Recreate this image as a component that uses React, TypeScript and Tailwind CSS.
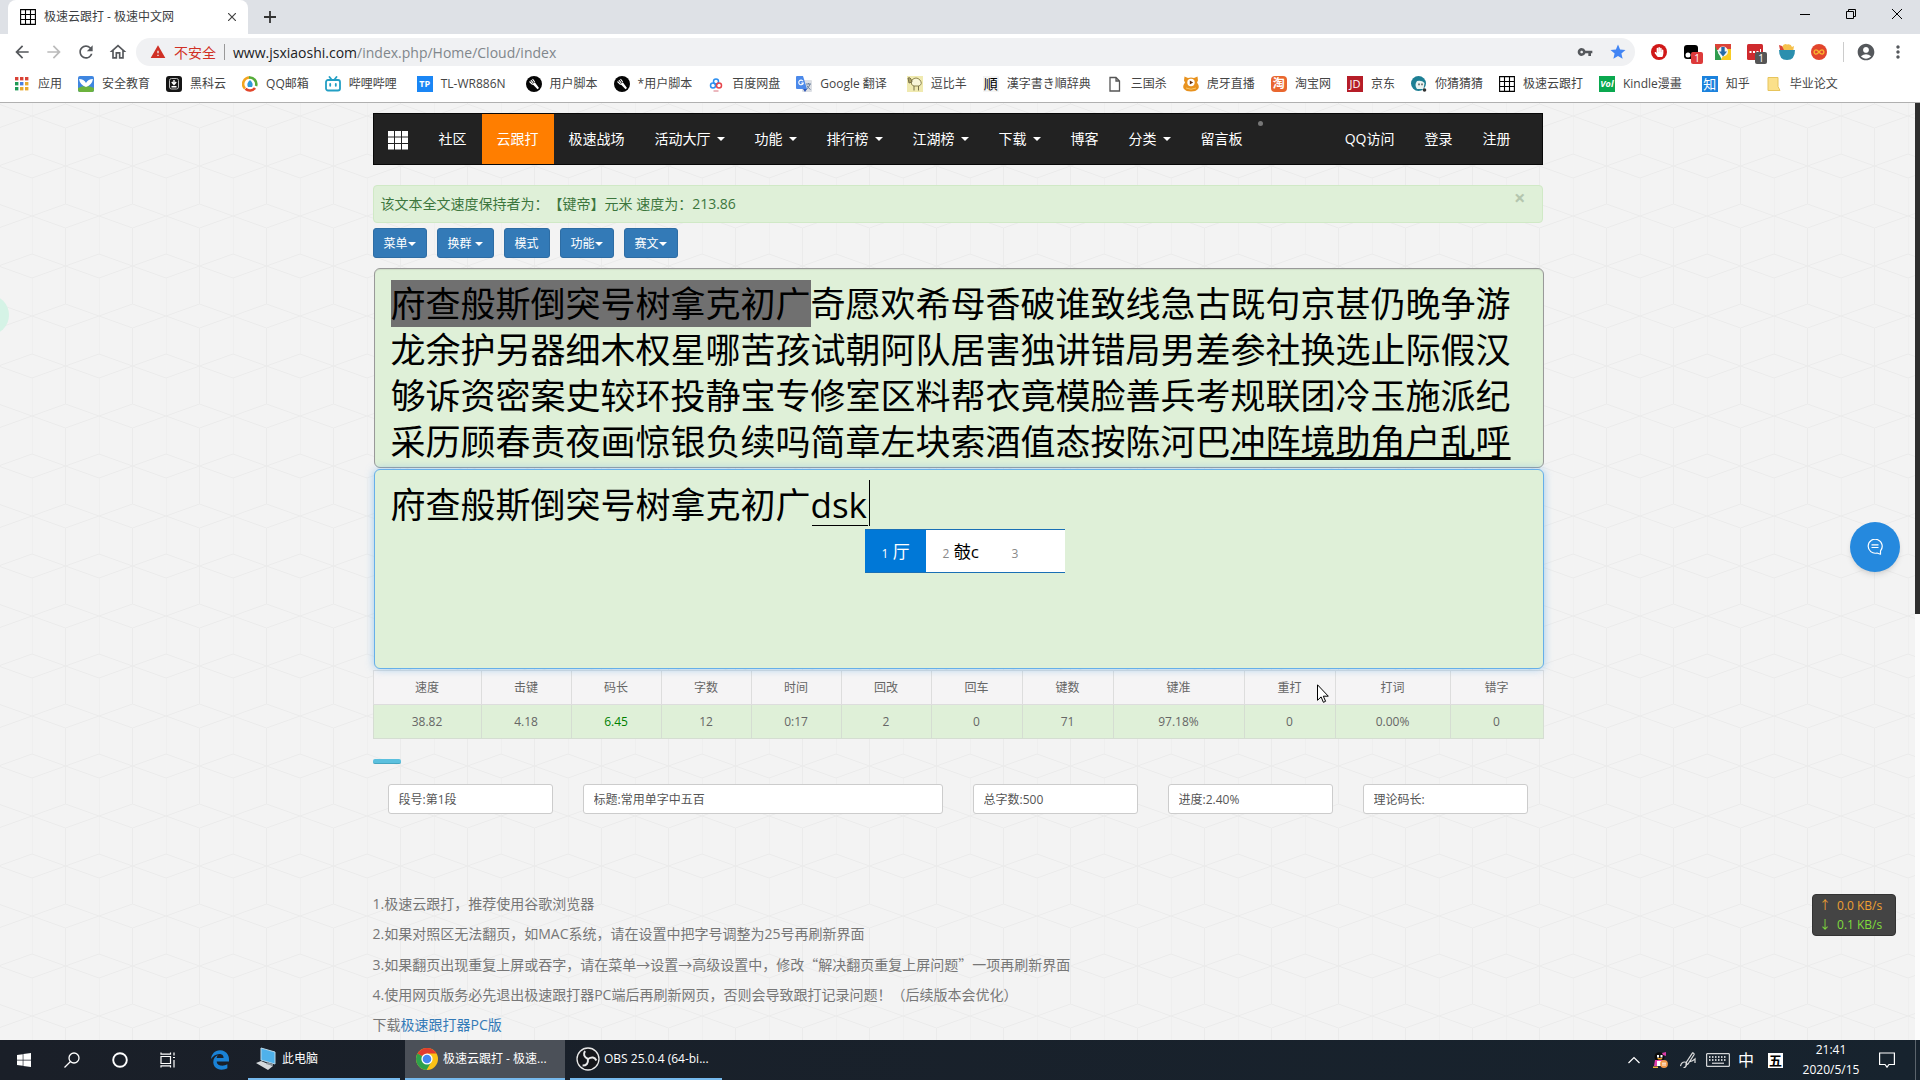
import React from 'react';
import {
  MdAccountCircle,
  MdArrowBack,
  MdArrowForward,
  MdMoreVert,
  MdOutlineHome,
  MdRefresh,
  MdStar,
  MdVpnKey,
  MdWarning,
} from 'react-icons/md';
import { FaEdgeLegacy, FaHandPaper, FaWindows } from 'react-icons/fa';

interface IconProps {
  className?: string;
}

const GridIcon: React.FC<IconProps> = ({ className }) => (
  <svg viewBox="0 0 16 16" className={className} fill="none" stroke="#000" strokeWidth="1.1" aria-hidden="true">
    <path d="M.6.6h14.8v14.8H.6zM5.5.6v14.8M10.5.6v14.8M.6 5.5h14.8M.6 10.5h14.8" />
  </svg>
);

const AppsIcon = () => (
  <svg viewBox="0 0 16 16" className="w-4 h-4" aria-hidden="true">
    {['#d94235', '#d94235', '#d94235', '#1e9a55', '#4a7fe0', '#e9a92c', '#1e9a55', '#e9a92c', '#e9a92c'].map((c, i) => (
      <rect key={i} x={1 + (i % 3) * 5} y={1 + Math.floor(i / 3) * 5} width="3.4" height="3.4" fill={c} />
    ))}
  </svg>
);

const WingIcon = () => (
  <svg viewBox="0 0 16 16" className="w-4 h-4" aria-hidden="true">
    <rect width="16" height="16" rx="2" fill="#3f86e0" />
    <path d="M0 12q8-4 16 0v2a2 2 0 0 1-2 2H2a2 2 0 0 1-2-2z" fill="#6cb33e" />
    <path d="M1 3q5 0 7 4 2-4 7-4-1 6-7 8Q2 9 1 3z" fill="#fff" />
  </svg>
);

const DarkCloudIcon = () => (
  <svg viewBox="0 0 16 16" className="w-4 h-4" aria-hidden="true">
    <rect width="16" height="16" rx="3" fill="#151515" />
    <rect x="3.500" y="2.500" width="9" height="10.500" rx="2" fill="none" stroke="#bbb" />
    <path d="M8 4v4M5.800 6L8 8.500 10.200 6M5.500 10.800h5" stroke="#fff" strokeWidth="1.400" fill="none" />
  </svg>
);

const MailIcon = () => (
  <svg viewBox="0 0 16 16" className="w-4 h-4" aria-hidden="true" fill="none" strokeWidth="2.600">
    <path d="M8 1.500A6.500 6.500 0 0 0 3 12.500" stroke="#f3a51f" />
    <path d="M7 1.600A6.500 6.500 0 0 1 14 10" stroke="#57ad3a" />
    <path d="M3.500 12.800A6.500 6.500 0 0 0 13 12" stroke="#e2462b" />
    <path d="M8 4q4 3.500 2 7H6Q4 7.500 8 4z" fill="#2f9ad8" />
  </svg>
);

const BiliIcon = () => (
  <svg viewBox="0 0 16 16" className="w-4 h-4" aria-hidden="true" fill="none" stroke="#239fc4" strokeWidth="1.800" strokeLinecap="round">
    <rect x="1" y="4" width="14" height="10.500" rx="2" />
    <path d="M4.500 1L6.500 3.500M11.500 1L9.500 3.500M5.200 8v1.800M10.800 8v1.800" />
  </svg>
);

const ScriptIcon = () => (
  <svg viewBox="0 0 16 16" className="w-4 h-4" aria-hidden="true">
    <circle cx="8" cy="8" r="8" fill="#050505" />
    <path d="M3.500 5.500L6 8q1.200.6 1.800 0M6.500 3l2.200 3M4.900 4.200l2.300 2.600" stroke="#fff" strokeWidth="1.100" fill="none" />
    <path d="M6.500 8l5 5.300 1.500-1.300L8.800 6.200z" fill="#fff" />
  </svg>
);

const PanIcon = () => (
  <svg viewBox="0 0 16 16" className="w-4 h-4" aria-hidden="true" fill="none" strokeWidth="1.500">
    <circle cx="8" cy="5.500" r="2.500" stroke="#2d8ff0" />
    <circle cx="5" cy="9.500" r="2.500" stroke="#2d8ff0" />
    <circle cx="11" cy="9.500" r="2.500" stroke="#e6454c" />
    <path d="M5.500 15h5" stroke="#e6a0a8" />
  </svg>
);

const TranslateIcon = () => (
  <svg viewBox="0 0 16 16" className="w-4 h-4" aria-hidden="true">
    <rect x="6" y="4" width="10" height="12" rx="1" fill="#dcdfe4" />
    <path d="M10 8h5M12.500 7v1M14 8q-1 4-4 5.500M11 9.500q1 2.500 3.500 4" stroke="#69809e" fill="none" />
    <path d="M1 0h6l4 13H1a1 1 0 0 1-1-1V1a1 1 0 0 1 1-1z" fill="#4b89ea" />
    <path d="M7 13h4l-2 3z" fill="#2f57b8" />
    <path d="M7 5.200A2.300 2.300 0 1 0 7.300 7H5.200" stroke="#fff" strokeWidth="1.100" fill="none" />
  </svg>
);

const SheepIcon = () => (
  <svg viewBox="0 0 16 16" className="w-4 h-4" aria-hidden="true">
    <rect width="16" height="16" fill="#f0eab0" />
    <path d="M5 4q4-4 8 0 3 4-1 6H7Q3 9 5 4z" fill="#f8f5d8" stroke="#8d8550" />
    <path d="M7 10v4.500M11.500 10v4.500M1 2q2-1 3 1l1 3-3 1z" stroke="#77704a" fill="#aaa060" />
  </svg>
);

const PageIcon = () => (
  <svg viewBox="0 0 16 16" className="w-4 h-4" aria-hidden="true" fill="none" stroke="#555" strokeWidth="1.300">
    <path d="M3 1.500h6L12.500 5v10H3zM9 1.500V5h3.500" />
  </svg>
);

const TigerIcon = () => (
  <svg viewBox="0 0 16 16" className="w-4 h-4" aria-hidden="true">
    <path d="M1.500.500L5 2q3-1 6 0l3.500-1.500.5 4-1 2q3 4 1 6.500-2 2.500-7 2.500T1 13q-2-2.500 1-6.500l-1-2z" fill="#e8921f" />
    <circle cx="8" cy="6.500" r="3.700" fill="#fff" />
    <path d="M6.800 4.500l3.400 2-3.400 2z" fill="#6b3410" />
    <path d="M3 12q5 2.500 10 0" stroke="#f7c768" fill="none" />
  </svg>
);

const GuessIcon = () => (
  <svg viewBox="0 0 16 16" className="w-4 h-4" aria-hidden="true">
    <circle cx="7.500" cy="7.500" r="7.500" fill="#1d7f94" />
    <path d="M6 5q5-1 7.500 2l-1 6H6Q3 9 6 5z" fill="#e9f3f2" />
    <path d="M8 7.500v1.800M11 7.500v1.800" stroke="#222" strokeWidth="1.100" />
    <circle cx="13.500" cy="14" r="1.800" fill="#333" />
  </svg>
);

const FolderIcon = () => (
  <svg viewBox="0 0 16 16" className="w-4 h-4" aria-hidden="true">
    <path d="M2 1.500h10v9l2 4H2z" fill="#fbe08a" stroke="#e7c45c" />
  </svg>
);

const LetterIcon: React.FC<{ text: string; className: string }> = ({ text, className }) => (
  <span className={`flex items-center justify-center w-4 h-4 leading-4 ${className}`} aria-hidden="true">
    {text}
  </span>
);

interface Bookmark {
  label: string;
  icon: React.ReactNode;
  wide?: boolean;
}

const bookmarks: Bookmark[] = [
  { label: '应用', icon: <AppsIcon /> },
  { label: '安全教育', icon: <WingIcon /> },
  { label: '黑科云', icon: <DarkCloudIcon /> },
  { label: 'QQ邮箱', icon: <MailIcon /> },
  { label: '哔哩哔哩', icon: <BiliIcon />, wide: true },
  { label: 'TL-WR886N', icon: <LetterIcon text="TP" className="bg-[#1a86f5] text-white text-[9px] font-bold" />, wide: true },
  { label: '用户脚本', icon: <ScriptIcon /> },
  { label: '*用户脚本', icon: <ScriptIcon /> },
  { label: '百度网盘', icon: <PanIcon /> },
  { label: 'Google 翻译', icon: <TranslateIcon />, wide: true },
  { label: '逗比羊', icon: <SheepIcon /> },
  { label: '漢字書き順辞典', icon: <LetterIcon text="順" className="bg-[#f4f4f4] text-black text-[14px]" /> },
  { label: '三国杀', icon: <PageIcon /> },
  { label: '虎牙直播', icon: <TigerIcon /> },
  { label: '淘宝网', icon: <LetterIcon text="淘" className="bg-[#e9672f] text-white text-[12px] font-bold rounded" /> },
  { label: '京东', icon: <LetterIcon text="JD" className="bg-[#b61d28] text-white text-[11px]" /> },
  { label: '你猜猜猜', icon: <GuessIcon /> },
  { label: '极速云跟打', icon: <GridIcon className="w-4 h-4" /> },
  { label: 'Kindle漫畫', icon: <LetterIcon text="Vol" className="bg-[#0aa84f] text-white text-[9px] font-bold italic" />, wide: true },
  { label: '知乎', icon: <LetterIcon text="知" className="bg-[#1b82dd] text-white text-[13px]" /> },
  { label: '毕业论文', icon: <FolderIcon /> },
];

const Badge: React.FC<{ className: string }> = ({ className }) => (
  <span className={`absolute left-2 top-2 w-3 h-3 rounded-xs text-white text-[10px] leading-3 text-center ${className}`}>1</span>
);

const Extensions = () => (
  <div className="flex items-center gap-4">
    <button aria-label="Adblock" className="flex items-center justify-center w-4 h-4 rounded-full bg-[#d01818] text-white">
      <FaHandPaper className="w-2.5 h-2.5" />
    </button>
    <button aria-label="Tampermonkey" className="relative w-4 h-4">
      <svg viewBox="0 0 16 16" className="w-4 h-4">
        <rect x="1" y="1" width="14" height="14" rx="3" fill="#000" />
        <circle cx="5" cy="11" r="2.500" fill="#fff" />
        <circle cx="11" cy="11" r="2.500" fill="#fff" />
      </svg>
      <Badge className="bg-[#dd3a3a]" />
    </button>
    <button aria-label="下载管理" className="w-4 h-4">
      <svg viewBox="0 0 16 16" className="w-4 h-4">
        <path d="M0 0h16v6H0z" fill="#dc4237" />
        <path d="M0 2l7 14H0z" fill="#2f9c4e" />
        <path d="M16 5v11H6l5-11z" fill="#f8cc24" />
        <circle cx="8" cy="7.500" r="5" fill="#f4f4f4" />
        <path d="M6.300 3h3.400v4.500H12L8 12.500 4 7.500h2.300z" fill="#2469a8" />
      </svg>
    </button>
    <button aria-label="LastPass" className="relative w-4 h-4">
      <svg viewBox="0 0 16 16" className="w-4 h-4">
        <rect width="16" height="16" rx="1.500" fill="#cf2a2e" />
        <path d="M2.500 8h2M6 8h2M9.500 8h2" stroke="#fff" strokeWidth="2" />
        <path d="M13.500 5v6" stroke="#fff" />
      </svg>
      <Badge className="bg-[#555]" />
    </button>
    <button aria-label="图片助手" className="w-4 h-4">
      <svg viewBox="0 0 16 16" className="w-4 h-4">
        <path d="M3 3q2-4 5-2.500Q12-.5 13 3l2-1-1 6H2z" fill="#f5c14c" />
        <path d="M0 1l3 1 2 4H1z" fill="#d8453b" />
        <path d="M0 6h16q0 10-8 10T0 6z" fill="#2b8fae" />
      </svg>
    </button>
    <button aria-label="Infinity" className="w-4 h-4">
      <svg viewBox="0 0 16 16" className="w-4 h-4">
        <circle cx="8" cy="8" r="8" fill="#e2452c" />
        <path d="M8 8Q5.500 5 4 6.200q-1.800 1.800 0 3.600Q5.500 11 8 8q2.500-3 4-1.800 1.800 1.800 0 3.600Q10.500 11 8 8z" stroke="#f9b52f" strokeWidth="1.400" fill="none" />
      </svg>
    </button>
  </div>
);

const BrowserChrome = () => (
  <header className="bg-white border-b border-[#b0b0b0] text-[#3c4043]">
    <div className="flex justify-between h-[34px] bg-[#dee1e6]">
      <div className="flex items-center pl-2">
        <div className="flex items-center w-60 h-full pl-3 pr-2 bg-white rounded-t-lg text-[12px]">
          <GridIcon className="w-4 h-4" />
          <span className="flex-1 pl-2">极速云跟打 - 极速中文网</span>
          <button aria-label="关闭标签页" className="p-1">
            <svg viewBox="0 0 8 8" className="w-2 h-2" stroke="#444" strokeWidth="1.200">
              <path d="M0 0l8 8M8 0L0 8" />
            </svg>
          </button>
        </div>
        <button aria-label="新标签页" className="ml-4">
          <svg viewBox="0 0 12 12" className="w-3 h-3" stroke="#333" strokeWidth="1.800">
            <path d="M6 0v12M0 6h12" />
          </svg>
        </button>
      </div>
      <div className="flex items-center h-7 text-black">
        <button aria-label="最小化" className="flex justify-center w-[46px]">
          <svg viewBox="0 0 10 10" className="w-2.5 h-2.5" stroke="currentColor"><path d="M0 5.500h10" /></svg>
        </button>
        <button aria-label="还原" className="flex justify-center w-[46px]">
          <svg viewBox="0 0 10 10" className="w-2.5 h-2.5" stroke="currentColor" fill="none"><path d="M.5 2.500h7v7h-7zM2.500 2.500v-2h7v7h-2" /></svg>
        </button>
        <button aria-label="关闭" className="flex justify-center w-[46px]">
          <svg viewBox="0 0 10 10" className="w-2.5 h-2.5" stroke="currentColor"><path d="M0 0l10 10M10 0L0 10" /></svg>
        </button>
      </div>
    </div>

    <div className="flex items-center h-9 pl-3 pr-3 text-[#55585c]">
      <nav className="flex items-center gap-3">
        <button aria-label="后退"><MdArrowBack className="w-5 h-5" /></button>
        <button aria-label="前进" className="text-[#bbb]"><MdArrowForward className="w-5 h-5" /></button>
        <button aria-label="刷新"><MdRefresh className="w-5 h-5" /></button>
        <button aria-label="主页"><MdOutlineHome className="w-5 h-5" /></button>
      </nav>
      <div className="flex items-center flex-1 h-7 ml-2 pl-2.5 pr-2 rounded-full bg-[#f0f1f3]">
        <MdWarning className="w-4 h-4 ml-1 text-[#d03025]" />
        <span className="ml-2 text-[14px] text-[#d03025]">不安全</span>
        <span className="w-px h-4 ml-2 mr-2 bg-[#999]"></span>
        <a href="#top" className="flex-1 text-[14px] text-[#80868b]">
          <span className="text-[#202124]">www.jsxiaoshi.com</span>/index.php/Home/Cloud/index
        </a>
        <MdVpnKey className="w-4 h-4 mr-4" />
        <MdStar className="w-[18px] h-[18px] text-[#4285f4]" />
      </div>
      <div className="flex items-center ml-4">
        <Extensions />
        <span className="w-px h-5 ml-4 mr-3 bg-[#ccc]"></span>
        <button aria-label="账户"><MdAccountCircle className="w-5 h-5" /></button>
        <button aria-label="菜单" className="ml-3"><MdMoreVert className="w-5 h-5" /></button>
      </div>
    </div>

    <nav className="flex items-center gap-4 h-7 mb-1 pl-3.5 text-[12px] text-[#444]">
      {bookmarks.map(({ label, icon, wide }, i) => (
        <a key={i} href="#bookmark" className={`flex items-center gap-2 whitespace-nowrap shrink-0 ${wide ? 'pr-1' : ''}`}>
          {icon}
          {label}
        </a>
      ))}
    </nav>
  </header>
);

const Caret: React.FC<IconProps> = ({ className = '' }) => (
  <span className={`inline-block border-x-4 border-t-4 border-x-transparent border-t-current align-middle ${className}`}></span>
);

const navItems = [
  { label: '社区' },
  { label: '云跟打', active: true },
  { label: '极速战场' },
  { label: '活动大厅', menu: true },
  { label: '功能', menu: true },
  { label: '排行榜', menu: true },
  { label: '江湖榜', menu: true },
  { label: '下载', menu: true },
  { label: '博客' },
  { label: '分类', menu: true },
  { label: '留言板' },
];

const SiteNav = () => (
  <nav className="relative flex justify-between h-[52px] mt-2.5 bg-[#222] border border-[#080808] text-[14px] text-white">
    <div className="flex">
      <a href="#home" aria-label="首页" className="flex items-center pl-[14px] pr-4 pt-0.5">
        <svg viewBox="0 0 20 20" className="w-5 h-5" fill="#fff">
          {[0, 1, 2, 3, 4, 5, 6, 7, 8].map((i) => (
            <rect key={i} x={(i % 3) * 7} y={1 + Math.floor(i / 3) * 6.5} width="6" height="5.500" />
          ))}
        </svg>
      </a>
      {navItems.map(({ label, active, menu }) => (
        <a key={label} href="#nav" className={`flex items-center px-[15px] pb-0.5 ${active ? 'bg-[#ff7e00]' : ''}`}>
          {label}
          {menu && <Caret className="mt-0.5 ml-1.5" />}
        </a>
      ))}
    </div>
    <div className="flex pr-4">
      {['QQ访问', '登录', '注册'].map((label) => (
        <a key={label} href="#nav" className="flex items-center px-[15px] pb-0.5">{label}</a>
      ))}
    </div>
    <span className="absolute left-[884px] top-[7px] w-[5px] h-[5px] rounded-full bg-[#777]"></span>
  </nav>
);

const toolButtons = [
  { label: '菜单', caret: '' },
  { label: '换群', caret: 'ml-[3px]' },
  { label: '模式' },
  { label: '功能', caret: '' },
  { label: '赛文', caret: '' },
];

const stats = [
  { name: '速度', value: '38.82', width: 'w-[108px]' },
  { name: '击键', value: '4.18', width: 'w-[90px]' },
  { name: '码长', value: '6.45', width: 'w-[90px]' },
  { name: '字数', value: '12', width: 'w-[90px]' },
  { name: '时间', value: '0:17', width: 'w-[90px]' },
  { name: '回改', value: '2', width: 'w-[90px]' },
  { name: '回车', value: '0', width: 'w-[91px]' },
  { name: '键数', value: '71', width: 'w-[91px]' },
  { name: '键准', value: '97.18%', width: 'w-[131px]' },
  { name: '重打', value: '0', width: 'w-[91px]' },
  { name: '打词', value: '0.00%', width: 'w-[115px]' },
  { name: '错字', value: '0', width: 'w-[93px]' },
];

const infoFields = [
  { label: '段号', value: '段号:第1段', span: 'col-span-2' },
  { label: '标题', value: '标题:常用单字中五百', span: 'col-span-4' },
  { label: '总字数', value: '总字数:500', span: 'col-span-2' },
  { label: '进度', value: '进度:2.40%', span: 'col-span-2' },
  { label: '理论码长', value: '理论码长:', span: 'col-span-2' },
];

const typed = '府查般斯倒突号树拿克初广';
const upcoming =
  '奇愿欢希母香破谁致线急古既句京甚仍晚争游龙余护另器细木权星哪苦孩试朝阿队居害独讲错局男差参社换选止际假汉够诉资密案史较环投静宝专修室区料帮衣竟模脸善兵考规联团冷玉施派纪采历顾春责夜画惊银负续吗简章左块索酒值态按陈河巴';
const nextWords = '冲阵境助角户乱呼';

const TypingArea = () => (
  <div className="ml-px -mr-px text-[35px] leading-[46px] text-black">
    <div className="h-[200px] pt-3 pl-4 pr-3 overflow-hidden break-all bg-[#dff0d8] border border-[#999] rounded-md shadow-[inset_0_1px_1px_rgba(0,0,0,0.08)]">
      <span className="bg-[#707070]">{typed}</span>
      {upcoming}
      <span className="underline decoration-[3px] underline-offset-2 [text-decoration-skip-ink:none]">{nextWords}</span>
    </div>
    <div className="relative mt-px">
      <textarea
        aria-label="跟打区"
        defaultValue={`${typed}dsk`}
        className="block w-full h-[200px] pt-3 pl-4 pr-3 resize-none outline-none bg-[#dff0d8] border border-[#66afe9] rounded-md shadow-[0_0_8px_rgba(102,175,233,0.6)]"
      />
      {/* composition underline and caret */}
      <span className="absolute left-[438px] top-[11px] w-[58px] h-[46px] border-r border-black"></span>
      <span className="absolute left-[438px] top-[56px] w-14 h-px bg-black"></span>
      {/* input method candidates */}
      <ol className="absolute left-[491px] top-[60px] flex w-[200px] h-11 bg-white border-y border-[#1a6fb5] text-[17px] leading-[44px]">
        <li className="w-[61px] pl-[17px] bg-[#0078d7] text-white whitespace-nowrap"><small className="text-[12px]">1</small> 厅</li>
        <li className="w-[69px] pl-[17px] whitespace-nowrap"><small className="text-[12px] text-[#888]">2</small> 攲c</li>
        <li className="pl-[17px]"><small className="text-[12px] text-[#888]">3</small></li>
      </ol>
    </div>
  </div>
);

const StatsTable = () => (
  <table className="w-full mt-px table-fixed border-collapse text-[12px] text-[#666] text-center">
    <thead>
      <tr className="h-[34px] bg-[#f5f4f5]">
        {stats.map(({ name, width }) => (
          <th key={name} scope="col" className={`font-normal border border-[#ddd] ${width}`}>{name}</th>
        ))}
      </tr>
    </thead>
    <tbody>
      <tr className="h-[34px] bg-[#dff0d8]">
        {stats.map(({ name, value }) => (
          <td key={name} className={`border border-[#d5ddd2] ${name === '码长' ? 'text-[#008000]' : ''}`}>{value}</td>
        ))}
      </tr>
    </tbody>
  </table>
);

const CubeBackground = () => (
  <svg className="absolute inset-0 w-full h-full" aria-hidden="true">
    <defs>
      <pattern id="cubes" width="67" height="100" x="32" y="13" patternUnits="userSpaceOnUse">
        <path
          d="M0 0L33.500-12 67 0 33.500 12zM0 100L33.500 88 67 100M-33.500 50L0 38 33.500 50 0 62zM33.500 50L67 38M33.500 50L67 62M0 0v38M0 62v38M33.500 12v76"
          fill="none"
          stroke="#ebebeb"
        />
      </pattern>
    </defs>
    <rect width="100%" height="100%" fill="url(#cubes)" />
  </svg>
);

const Page = () => (
  <main className="relative flex-1 min-h-0 overflow-hidden bg-[#f3f3f3]">
    <CubeBackground />
    <div className="relative max-w-[1170px] mx-auto">
      <SiteNav />
      <div role="alert" className="flex justify-between h-[38px] mt-5 pl-[7px] pr-4 pb-0.5 items-center bg-[#dff0d8] border border-[#d0e9c6] rounded text-[14px] text-[#3c763d]">
        <span>该文本全文速度保持者为：【键帝】元米 速度为：213.86</span>
        <button aria-label="关闭提示" className="mb-2.5 text-[20px] leading-5 font-bold text-[#b4c6ae]">×</button>
      </div>
      <div className="flex gap-2.5 mt-[5px]">
        {toolButtons.map(({ label, caret }) => (
          <button key={label} className="flex items-center h-[30px] px-2.5 pt-px bg-[#337ab7] border border-[#2e6da4] rounded-[3px] text-[12px] text-white">
            {label}
            {caret !== undefined && <Caret className={caret} />}
          </button>
        ))}
      </div>
      <div className="mt-2.5">
        <TypingArea />
      </div>
      <StatsTable />
      <div className="w-7 h-[5px] mt-5 rounded-xs bg-[#5bc0de] border-b border-[#46a5c0]"></div>
      <form className="grid grid-cols-12 mt-5">
        {infoFields.map(({ label, value, span }) => (
          <div key={label} className={`px-[15px] ${span}`}>
            <input aria-label={label} defaultValue={value} className="w-full h-[30px] px-2.5 bg-white border border-[#ccc] rounded-[3px] text-[12px] text-[#555]" />
          </div>
        ))}
      </form>
      <section className="flex flex-col gap-2.5 mt-20 text-[14px] leading-5 text-[#777]">
        <p>1.极速云跟打，推荐使用谷歌浏览器</p>
        <p>2.如果对照区无法翻页，如MAC系统，请在设置中把字号调整为25号再刷新界面</p>
        <p>
          3.如果翻页出现重复上屏或吞字，请在菜单→设置→高级设置中，修改
          <q className="font-['Noto_Sans_CJK_SC',sans-serif] [quotes:'“'_'”']">解决翻页重复上屏问题</q>
          一项再刷新界面
        </p>
        <p>4.使用网页版务必先退出极速跟打器PC端后再刷新网页，否则会导致跟打记录问题！（后续版本会优化）</p>
        <p>下载<a href="#download" className="text-[#337ab7]">极速跟打器PC版</a></p>
      </section>
    </div>

    <span className="absolute -left-[31px] top-[192px] w-10 h-10 rounded-full bg-[#d5f3e6]"></span>
    <button aria-label="在线客服" className="absolute right-[15px] top-[419px] flex items-center justify-center w-[50px] h-[50px] rounded-full bg-[#2589de] shadow-md">
      <svg viewBox="0 0 16 16" className="w-4 h-4" fill="none" stroke="#fff" strokeWidth="1.200">
        <path d="M13.500 15.200v-3.400A7 7 0 1 0 10 14zM4.500 5.800h7M4.500 8.500h7" strokeLinejoin="round" />
      </svg>
    </button>
    <div className="absolute right-[19px] bottom-[104px] flex flex-col justify-center w-[84px] h-[42px] pl-1.5 bg-[#444] border border-[#333] rounded-sm text-[12px] leading-[19px]">
      <span className="flex gap-1.5 text-[#eea032]"><span>↑</span>0.0 KB/s</span>
      <span className="flex gap-1.5 text-[#80dc3c]"><span>↓</span>0.1 KB/s</span>
    </div>
  </main>
);

const ChromeLogo = () => (
  <svg viewBox="0 0 24 24" className="w-6 h-6" aria-hidden="true">
    <circle cx="12" cy="12" r="11" fill="#fbc116" />
    <path d="M12 12L2.500 6.500A11 11 0 0 1 21.500 6.500H12z" fill="#e23c2e" />
    <path d="M2.500 6.500A11 11 0 0 0 11.500 23l5-8.500L12 12z" fill="#2da14c" />
    <circle cx="12" cy="12" r="5.600" fill="#fff" />
    <circle cx="12" cy="12" r="4.300" fill="#4486f0" />
  </svg>
);

const ObsLogo = () => (
  <svg viewBox="0 0 24 24" className="w-6 h-6" aria-hidden="true" fill="none">
    <circle cx="12" cy="12" r="11" fill="#15161a" stroke="#e8e8e8" strokeWidth="1.300" />
    <g stroke="#e8e8e8" strokeWidth="2">
      <path d="M9 4Q6 9 12 12" />
      <path d="M9 4Q6 9 12 12" transform="rotate(120 12 12)" />
      <path d="M9 4Q6 9 12 12" transform="rotate(240 12 12)" />
    </g>
  </svg>
);

const PcIcon = () => (
  <svg viewBox="0 0 24 24" className="w-6 h-6" aria-hidden="true">
    <path d="M7 1l14 4v12L7 13z" fill="#4fb1ea" stroke="#b9d8ea" />
    <path d="M2 16l5-2 12 5-5 4z" fill="#d5d9dc" />
    <path d="M13 15l6 2v2l-7-2z" fill="#8a949c" />
  </svg>
);

const Taskbar = () => (
  <footer className="flex justify-between h-10 bg-linear-to-r from-[#1a1f28] to-[#17232e] text-[12px] text-white">
    <div className="flex items-center">
      <div className="flex items-center h-full">
        <button aria-label="开始" className="flex justify-center w-12"><FaWindows className="w-4 h-4" /></button>
        <button aria-label="搜索" className="flex justify-center w-12">
          <svg viewBox="0 0 16 16" className="w-4 h-4" fill="none" stroke="#fff" strokeWidth="1.300">
            <circle cx="10" cy="6" r="5" /><path d="M6.500 9.500L.5 15.500" />
          </svg>
        </button>
        <button aria-label="Cortana" className="flex justify-center w-12">
          <svg viewBox="0 0 16 16" className="w-4 h-4" fill="none" stroke="#fff" strokeWidth="1.900"><circle cx="8" cy="8" r="6.800" /></svg>
        </button>
        <button aria-label="任务视图" className="flex justify-center w-12">
          <svg viewBox="0 0 16 16" className="w-4 h-4" fill="none" stroke="#fff" strokeWidth="1.200">
            <path d="M1 4.500h9.500v7H1zM1 .5v1.700h9.500V.5M1 15.500v-1.700h9.500v1.700M14 .5v3M14 8v7.500M13 5.500h2" />
          </svg>
        </button>
        <button aria-label="Edge" className="flex justify-center w-14"><FaEdgeLegacy className="w-5 h-5 text-[#1a82d6]" /></button>
      </div>
      <div className="flex h-full gap-[5px]">
        <button className="flex items-center gap-1 w-[152px] h-full pl-1.5 border-b-2 border-[#76b9ed]"><PcIcon />此电脑</button>
        <button className="flex items-center gap-1 w-40 h-full pl-2.5 bg-[#4b5058] border-b-2 border-[#76b9ed] whitespace-nowrap"><ChromeLogo />极速云跟打 - 极速...</button>
        <button className="flex items-center gap-1 w-[152px] h-full pl-1.5 border-b-2 border-[#76b9ed] whitespace-nowrap"><ObsLogo />OBS 25.0.4 (64-bi...</button>
      </div>
    </div>
    <div className="flex items-center">
      <button aria-label="显示隐藏的图标" className="mr-3">
        <svg viewBox="0 0 12 12" className="w-3 h-3" fill="none" stroke="#fff" strokeWidth="1.200"><path d="M.5 9L6 3.500 11.500 9" /></svg>
      </button>
      <svg viewBox="0 0 16 16" className="w-4 h-4 mr-3" aria-hidden="true">
        <ellipse cx="7.500" cy="5" rx="5" ry="4.800" fill="#0b0b0b" />
        <path d="M5 3h2v2.500H5zM8.500 3h2v2.500h-2z" fill="#fff" />
        <path d="M5 6h5.500l-1 1.500h-3z" fill="#f2a01e" />
        <path d="M10 1l4-1v4l-3-1z" fill="#d83aa6" />
        <path d="M3 8h9l1 6H2z" fill="#e03fae" />
        <path d="M5 9h4v5H5z" fill="#fff" />
        <path d="M1 14.500h5V16H1z" fill="#f0b03c" />
        <circle cx="12" cy="12" r="3.900" fill="#f39a4a" />
        <path d="M10 11.200h4M10 13h4" stroke="#fff" strokeWidth=".9" />
      </svg>
      <svg viewBox="0 0 16 16" className="w-4 h-4 mr-2.5" fill="none" stroke="#ddd" strokeWidth="1.200" aria-hidden="true">
        <path d="M12.500.800q2 .4 1.500 2L8 12l-2 1 .2-2.500zM.5 14q1-4 4-4t2 3-3 2.500M9 10q4-1 6-3v4" />
      </svg>
      <svg viewBox="0 0 24 14" className="w-6 h-3.5 mr-2" fill="none" stroke="#fff" aria-hidden="true">
        <path d="M.7.700h22.600v12.600H.7z" />
        <path d="M3 4h18M3 7h18" strokeWidth="1.400" strokeDasharray="1.500 1.500" />
        <path d="M6 10.200h12" />
      </svg>
      <span className="mr-3.5 text-[16px]">中</span>
      <span className="w-[15px] h-[15px] mr-4 bg-white text-black text-[13px] leading-[14px] text-center font-bold">五</span>
      <div className="w-16 mr-4 text-center leading-5">
        <div>21:41</div>
        <div>2020/5/15</div>
      </div>
      <button aria-label="通知" className="mr-5">
        <svg viewBox="0 0 16 16" className="w-4 h-4" fill="none" stroke="#fff" strokeWidth="1.200"><path d="M.6 1h14.800v11.500H10L8 15.200 6 12.500H.6z" /></svg>
      </button>
      <span className="w-px h-10 mr-1 bg-[#5b646c]"></span>
    </div>
  </footer>
);

export default function App() {
  return (
    <div
      id="top"
      className="relative flex flex-col h-screen overflow-hidden font-['Open_Sans','Noto_Sans_CJK_SC',sans-serif] [text-spacing-trim:space-all]"
    >
      <BrowserChrome />
      <div className="flex flex-1 min-h-0">
        <Page />
        <div className="w-[5px] bg-[#fcfcfc]">
          <div className="h-[511px] bg-[#2e2e2e]"></div>
        </div>
      </div>
      <Taskbar />
      {/* mouse pointer */}
      <svg viewBox="0 0 12 19" className="absolute left-[1317px] top-[684px] w-3 h-[19px]" aria-hidden="true">
        <path d="M.5.800v15.500l3.600-3.400 2.300 5.400 2.200-1-2.300-5.100h5z" fill="#fff" stroke="#000" />
      </svg>
    </div>
  );
}
